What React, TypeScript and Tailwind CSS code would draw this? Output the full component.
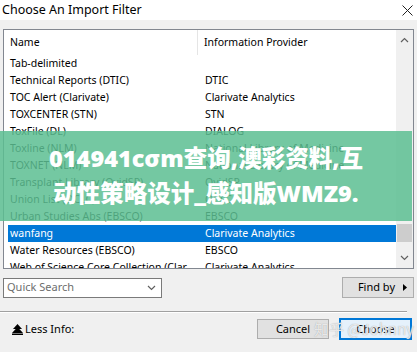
import React from "react";

const rows: [string, string][] = [
  ["Tab-delimited", ""],
  ["Technical Reports (DTIC)", "DTIC"],
  ["TOC Alert (Clarivate)", "Clarivate Analytics"],
  ["TOXCENTER (STN)", "STN"],
  ["ToxFile (DL)", "DIALOG"],
  ["Toxline (NLM)", "National Library of Medicine"],
  ["TOXNET (NLM)", "National Library of Medicine"],
  ["Transplant Library (OvidSP)", "OvidSP"],
  ["Union List (OCLC)", "OCLC"],
  ["Urban Studies Abs (EBSCO)", "EBSCO"],
  ["wanfang", "Clarivate Analytics"],
  ["Water Resources (EBSCO)", "EBSCO"],
  ["Web of Science Core Collection (Clar", "Clarivate Analytics"],
];

function Chevron({ up }: { up?: boolean }) {
  return (
    <svg width="9" height="6" viewBox="0 0 9 6" className="text-[#606060]">
      <path
        d={up ? "M1 5 L4.5 1.5 L8 5" : "M1 1 L4.5 4.5 L8 1"}
        fill="none"
        stroke="currentColor"
        strokeWidth="1.2"
      />
    </svg>
  );
}

function LessInfoIcon() {
  return (
    <svg width="11" height="11" viewBox="0 0 11 11">
      <path d="M5.5 0 L10 5 L1 5 Z" fill="#000" />
      <path d="M5.5 3 L11 9 L0 9 Z" fill="#000" />
      <rect x="0" y="9.5" width="11" height="1.5" fill="#000" />
    </svg>
  );
}

export default function App() {
  return (
    <div className="relative w-[417px] h-[352px] overflow-hidden bg-[#f0f0f0] text-[10.5px] text-black font-['Noto_Sans',sans-serif]">
      <div className="h-[20px] bg-white flex items-center justify-between pl-[2px] pr-[4px]">
        <span className="text-[12.5px] leading-none">Choose An Import Filter</span>
        <svg width="11" height="11" viewBox="0 0 11 11">
          <path d="M0.5 0.5 L10.5 10.5 M10.5 0.5 L0.5 10.5" stroke="#222" strokeWidth="1" />
        </svg>
      </div>

      <div className="px-[3px] pt-[9px]">
        <div className="h-[240px] border border-[#828790] bg-white flex overflow-hidden">
          <div className="flex-1 pl-[4px] overflow-hidden">
            <div className="h-[25px] flex items-center">
              <div className="w-[190px] h-full flex items-center pl-[2px] border-r border-[#e5e5e5]">Name</div>
              <div className="pl-[6px]">Information Provider</div>
            </div>
            {rows.map(([name, prov]) => {
              const sel = name === "wanfang";
              return (
                <div
                  key={name}
                  className={
                    sel
                      ? "h-[17px] flex items-center whitespace-nowrap bg-[#0078d7] text-white"
                      : "h-[17px] flex items-center whitespace-nowrap"
                  }
                >
                  <div className="w-[190px] pl-[2px] overflow-hidden">{name}</div>
                  <div className="pl-[7px]">{prov}</div>
                </div>
              );
            })}
          </div>
          <div className="w-[17px] bg-[#f0f0f0] flex flex-col items-center">
            <div className="h-[20px] flex items-center">
              <Chevron up />
            </div>
            <div className="flex-1 w-full flex flex-col pt-[174px] px-[1px]">
              <div className="h-[18px] bg-[#cdcdcd]" />
            </div>
            <div className="h-[20px] flex items-center">
              <Chevron />
            </div>
          </div>
        </div>

        <div className="mt-[8px] flex items-center justify-between">
          <div className="w-[159px] h-[20px] border border-[#7a7a7a] bg-white flex items-center justify-between pl-[3px] pr-[5px]">
            <span className="text-[#6d6d6d] text-[11px]">Quick Search</span>
            <Chevron />
          </div>
          <div className="w-[72px] h-[21px] border border-[#adadad] bg-[#e1e1e1] flex items-center justify-end pr-[6px] gap-[8px]">
            <span className="text-[11px]">Find by</span>
            <svg width="4" height="7" viewBox="0 0 4 7">
              <path d="M0 0 L4 3.5 L0 7 Z" fill="#000" />
            </svg>
          </div>
        </div>
      </div>

      <div className="mt-[13px] w-[407px] h-[2px] border-t border-[#a0a0a0] border-b border-b-white" />

      <div className="flex items-center justify-between pl-[12px] pr-[5px] pt-[5px]">
        <div className="flex items-center gap-[2px] text-[11px]">
          <LessInfoIcon />
          <span>Less Info:</span>
        </div>
        <div className="flex items-center gap-[10px] text-[11px]">
          <div className="w-[72px] h-[20px] border border-[#adadad] bg-[#e1e1e1] flex items-center justify-center">
            Cancel
          </div>
          <div className="w-[73px] h-[22px] border-2 border-[#0078d7] bg-[#e5f1fb] flex items-center justify-center">
            Choose
          </div>
        </div>
      </div>

      <div className="absolute left-[314px] top-[321px] text-[15px] leading-none text-white/75 [text-shadow:0_0_1px_#999] whitespace-nowrap font-['Noto_Sans_CJK_SC',sans-serif]">
        知乎 @Johnny
      </div>

      <div className="absolute left-0 top-[131px] w-[412px] h-[90px] bg-[rgba(92,190,146,0.85)] flex flex-col items-center justify-center text-white font-black text-[23.5px] leading-[35px] font-['Noto_Sans','Noto_Sans_CJK_SC',sans-serif]">
        <div>014941cσm查询,澳彩资料,互</div>
        <div>动性策略设计_感知版WMZ9.</div>
      </div>
    </div>
  );
}
